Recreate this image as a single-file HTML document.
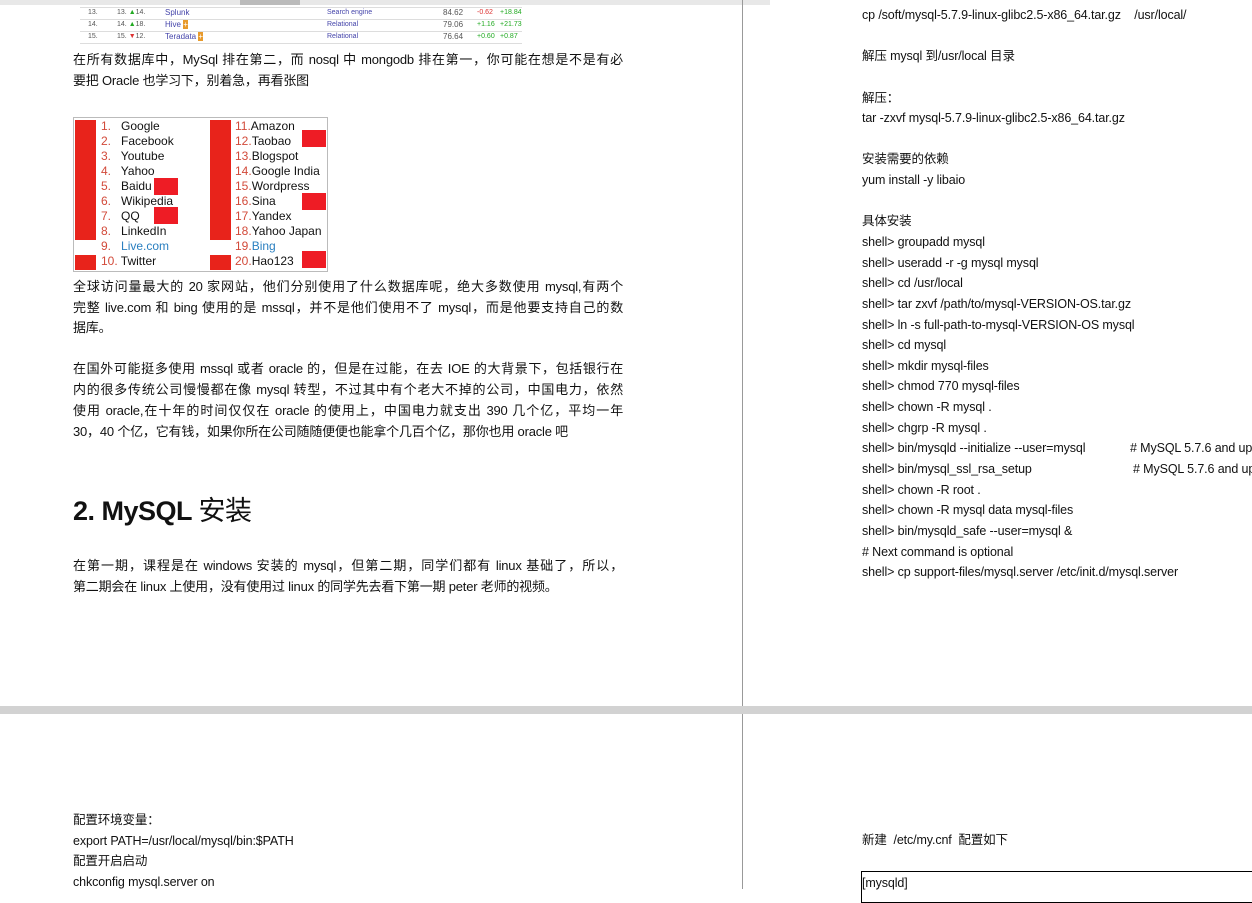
<!DOCTYPE html>
<html><head><meta charset="utf-8"><style>
body{margin:0;width:1252px;height:889px;background:#fff;position:relative;overflow:hidden;font-family:"Liberation Sans","Noto Sans CJK SC",sans-serif;color:#111}
.a{position:absolute;white-space:nowrap;font-size:12.5px;letter-spacing:-0.12px;line-height:20px;margin-top:1px}
.j{position:absolute;left:73px;width:550px;font-size:13px;line-height:20px;text-align:justify;text-align-last:justify;white-space:nowrap;letter-spacing:-0.2px;margin-top:1px}
.jl{text-align-last:left}
.t{position:absolute;font-size:7px;line-height:12px;color:#555}
.img{position:absolute;left:73px;top:117px;width:253px;height:153px;border:1px solid #bbb;background:#fff;font-family:"Liberation Sans",sans-serif;font-size:12px}
.img div{position:absolute;line-height:15px;white-space:nowrap;top:1px}
.lg{position:absolute;background:#e8231b}
.fl{position:absolute;width:24px;height:17px;background:#ee1c25}
.n{color:#d24a3a}
</style></head><body>
<div style="position:absolute;left:0;top:0;width:770px;height:5px;background:#e8e8e8"></div>
<div style="position:absolute;left:240px;top:0;width:60px;height:5px;background:#bbb"></div>
<div style="position:absolute;left:742px;top:0;width:1px;height:889px;background:#999"></div>
<div style="position:absolute;left:0;top:706px;width:1252px;height:8px;background:#d2d2d2"></div>

<div style="position:absolute;left:80px;top:7px;width:442px;height:38px;border-top:1px solid #ddd">
<div style="position:absolute;top:11px;left:0;width:442px;height:1px;background:#ddd"></div>
<div style="position:absolute;top:23px;left:0;width:442px;height:1px;background:#ddd"></div>
<div style="position:absolute;top:35px;left:0;width:442px;height:1px;background:#ddd"></div>
</div>
<div class="t" style="left:88px;top:7px">13.</div><div class="t" style="left:117px;top:7px">13. <span style="color:#2a2">▲</span>14.</div><div class="t" style="left:165px;top:7px;color:#44a;font-size:8px">Splunk</div><div class="t" style="left:327px;top:7px;color:#44a">Search engine</div><div class="t" style="left:443px;top:7px;font-size:8px">84.62</div><div class="t" style="left:477px;top:7px;color:#d33">-0.62</div><div class="t" style="left:500px;top:7px;color:#2a2">+18.84</div>
<div class="t" style="left:88px;top:19px">14.</div><div class="t" style="left:117px;top:19px">14. <span style="color:#2a2">▲</span>18.</div><div class="t" style="left:165px;top:19px;color:#44a;font-size:8px">Hive <span style="background:#e89a2c;color:#fff">+</span></div><div class="t" style="left:327px;top:19px;color:#44a">Relational</div><div class="t" style="left:443px;top:19px;font-size:8px">79.06</div><div class="t" style="left:477px;top:19px;color:#2a2">+1.16</div><div class="t" style="left:500px;top:19px;color:#2a2">+21.73</div>
<div class="t" style="left:88px;top:31px">15.</div><div class="t" style="left:117px;top:31px">15. <span style="color:#d33">▼</span>12.</div><div class="t" style="left:165px;top:31px;color:#44a;font-size:8px">Teradata <span style="background:#e89a2c;color:#fff">+</span></div><div class="t" style="left:327px;top:31px;color:#44a">Relational</div><div class="t" style="left:443px;top:31px;font-size:8px">76.64</div><div class="t" style="left:477px;top:31px;color:#2a2">+0.60</div><div class="t" style="left:500px;top:31px;color:#2a2">+0.87</div>

<div class="j" style="top:49px">在所有数据库中，MySql 排在第二，而 nosql 中 mongodb 排在第一，你可能在想是不是有必</div>
<div class="j jl" style="top:70px">要把 Oracle 也学习下，别着急，再看张图</div>

<div class="img">
<div class="lg" style="left:1px;top:2px;width:21px;height:120px"></div>
<div class="lg" style="left:1px;top:137px;width:21px;height:15px"></div>
<div class="lg" style="left:136px;top:2px;width:21px;height:120px"></div>
<div class="lg" style="left:136px;top:137px;width:21px;height:15px"></div>
<div style="left:27px;margin-top:0"><span class="n">1.</span>&nbsp;&nbsp; Google</div>
<div style="left:27px;margin-top:15px"><span class="n">2.</span>&nbsp;&nbsp; Facebook</div>
<div style="left:27px;margin-top:30px"><span class="n">3.</span>&nbsp;&nbsp; Youtube</div>
<div style="left:27px;margin-top:45px"><span class="n">4.</span>&nbsp;&nbsp; Yahoo</div>
<div style="left:27px;margin-top:60px"><span class="n">5.</span>&nbsp;&nbsp; Baidu</div>
<div style="left:27px;margin-top:75px"><span class="n">6.</span>&nbsp;&nbsp; Wikipedia</div>
<div style="left:27px;margin-top:90px"><span class="n">7.</span>&nbsp;&nbsp; QQ</div>
<div style="left:27px;margin-top:105px"><span class="n">8.</span>&nbsp;&nbsp; LinkedIn</div>
<div style="left:27px;margin-top:120px"><span class="n">9.</span>&nbsp;&nbsp; <span style="color:#2a7fc0">Live.com</span></div>
<div style="left:27px;margin-top:135px"><span class="n">10.</span> Twitter</div>
<div style="left:161px;margin-top:0"><span class="n">11.</span>Amazon</div>
<div style="left:161px;margin-top:15px"><span class="n">12.</span>Taobao</div>
<div style="left:161px;margin-top:30px"><span class="n">13.</span>Blogspot</div>
<div style="left:161px;margin-top:45px"><span class="n">14.</span>Google India</div>
<div style="left:161px;margin-top:60px"><span class="n">15.</span>Wordpress</div>
<div style="left:161px;margin-top:75px"><span class="n">16.</span>Sina</div>
<div style="left:161px;margin-top:90px"><span class="n">17.</span>Yandex</div>
<div style="left:161px;margin-top:105px"><span class="n">18.</span>Yahoo Japan</div>
<div style="left:161px;margin-top:120px"><span class="n">19.</span><span style="color:#2a7fc0">Bing</span></div>
<div style="left:161px;margin-top:135px"><span class="n">20.</span>Hao123</div>
<span class="fl" style="left:80px;top:60px"></span>
<span class="fl" style="left:80px;top:89px"></span>
<span class="fl" style="left:228px;top:12px"></span>
<span class="fl" style="left:228px;top:75px"></span>
<span class="fl" style="left:228px;top:133px"></span>
</div>

<div class="j" style="top:276px">全球访问量最大的 20 家网站，他们分别使用了什么数据库呢，绝大多数使用 mysql,有两个</div>
<div class="j" style="top:297px">完整 live.com 和 bing 使用的是 mssql，并不是他们使用不了 mysql，而是他要支持自己的数</div>
<div class="j jl" style="top:317px">据库。</div>
<div class="j" style="top:358px">在国外可能挺多使用 mssql 或者 oracle 的，但是在过能，在去 IOE 的大背景下，包括银行在</div>
<div class="j" style="top:379px">内的很多传统公司慢慢都在像 mysql 转型，不过其中有个老大不掉的公司，中国电力，依然</div>
<div class="j" style="top:400px">使用 oracle,在十年的时间仅仅在 oracle 的使用上，中国电力就支出 390 几个亿，平均一年</div>
<div class="j jl" style="top:421px">30，40 个亿，它有钱，如果你所在公司随随便便也能拿个几百个亿，那你也用 oracle 吧</div>

<div style="position:absolute;left:73px;top:493px;font-size:27px;font-weight:bold;line-height:36px;letter-spacing:-0.5px">2. MySQL <span style="font-weight:normal">安装</span></div>

<div class="j" style="top:555px">在第一期，课程是在 windows 安装的 mysql，但第二期，同学们都有 linux 基础了，所以，</div>
<div class="j jl" style="top:576px">第二期会在 linux 上使用，没有使用过 linux 的同学先去看下第一期 peter 老师的视频。</div>

<div class="a" style="left:73px;top:809px">配置环境变量：</div>
<div class="a" style="left:73px;top:830px">export PATH=/usr/local/mysql/bin:$PATH</div>
<div class="a" style="left:73px;top:850px">配置开启启动</div>
<div class="a" style="left:73px;top:871px">chkconfig mysql.server on</div>

<div class="a" style="left:862px;top:4px">cp /soft/mysql-5.7.9-linux-glibc2.5-x86_64.tar.gz &nbsp;&nbsp; /usr/local/</div>
<div class="a" style="left:862px;top:45px">解压 mysql 到/usr/local 目录</div>
<div class="a" style="left:862px;top:87px">解压：</div>
<div class="a" style="left:862px;top:107px">tar -zxvf mysql-5.7.9-linux-glibc2.5-x86_64.tar.gz</div>
<div class="a" style="left:862px;top:148px">安装需要的依赖</div>
<div class="a" style="left:862px;top:169px">yum install -y libaio</div>
<div class="a" style="left:862px;top:210px">具体安装</div>
<div class="a" style="left:862px;top:231px">shell&gt; groupadd mysql</div>
<div class="a" style="left:862px;top:252px">shell&gt; useradd -r -g mysql mysql</div>
<div class="a" style="left:862px;top:272px">shell&gt; cd /usr/local</div>
<div class="a" style="left:862px;top:293px">shell&gt; tar zxvf /path/to/mysql-VERSION-OS.tar.gz</div>
<div class="a" style="left:862px;top:314px">shell&gt; ln -s full-path-to-mysql-VERSION-OS mysql</div>
<div class="a" style="left:862px;top:334px">shell&gt; cd mysql</div>
<div class="a" style="left:862px;top:355px">shell&gt; mkdir mysql-files</div>
<div class="a" style="left:862px;top:375px">shell&gt; chmod 770 mysql-files</div>
<div class="a" style="left:862px;top:396px">shell&gt; chown -R mysql .</div>
<div class="a" style="left:862px;top:417px">shell&gt; chgrp -R mysql .</div>
<div class="a" style="left:862px;top:437px">shell&gt; bin/mysqld --initialize --user=mysql</div>
<div class="a" style="left:1130px;top:437px"># MySQL 5.7.6 and up</div>
<div class="a" style="left:862px;top:458px">shell&gt; bin/mysql_ssl_rsa_setup</div>
<div class="a" style="left:1133px;top:458px"># MySQL 5.7.6 and up</div>
<div class="a" style="left:862px;top:479px">shell&gt; chown -R root .</div>
<div class="a" style="left:862px;top:499px">shell&gt; chown -R mysql data mysql-files</div>
<div class="a" style="left:862px;top:520px">shell&gt; bin/mysqld_safe --user=mysql &amp;</div>
<div class="a" style="left:862px;top:541px"># Next command is optional</div>
<div class="a" style="left:862px;top:561px">shell&gt; cp support-files/mysql.server /etc/init.d/mysql.server</div>

<div class="a" style="left:862px;top:829px">新建 &nbsp;/etc/my.cnf &nbsp;配置如下</div>
<div style="position:absolute;left:861px;top:871px;width:400px;height:30px;border:1px solid #000"></div>
<div class="a" style="left:862px;top:872px">[mysqld]</div>
</body></html>
